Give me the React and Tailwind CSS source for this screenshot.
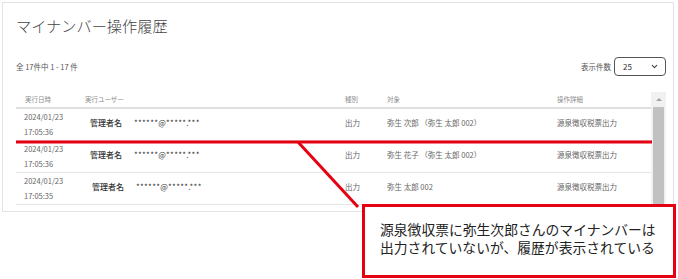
import { ChevronDown } from 'lucide-react';

const rows = [
    { date: '2024/01/23', time: '17:05:36', target: '弥生 次郎 （弥生 太郎 002）' },
    { date: '2024/01/23', time: '17:05:36', target: '弥生 花子 （弥生 太郎 002）' },
    { date: '2024/01/23', time: '17:05:35', target: '弥生 太郎 002' },
];

const cols = 'grid grid-cols-[64px_261px_42px_170px_1fr]';

function App() {
    return (
        <div className="relative w-[678px] h-[279px] bg-white overflow-hidden font-['Noto_Sans_CJK_JP','Noto_Sans',sans-serif]">
            <div className="ml-[2px] mt-[2px] w-[672px] h-[210px] border border-[#e3e3e3] flex flex-col pl-[13px] pr-[6px] overflow-hidden">
                <h1 className="pt-[10px] text-[15.2px] leading-[24px] text-[#444] font-light">マイナンバー操作履歴</h1>

                <div className="mt-[20px] h-[19px] flex justify-between items-center">
                    <div className="text-[7.5px] text-[#555] pt-[1px]">全 17件中 1 - 17 件</div>
                    <div className="flex items-center gap-[3px] pr-[1px]">
                        <span className="text-[7.5px] text-[#555]">表示件数</span>
                        <div className="w-[52px] h-[19px] border border-[#555] rounded-[4px] flex items-center justify-between pl-[8px] pr-[6px]">
                            <span className="text-[8px] text-[#333]">25</span>
                            <ChevronDown size={9} strokeWidth={3} color="#444" />
                        </div>
                    </div>
                </div>

                <div className="mt-[16px] flex-1 min-h-0 flex">
                    <div className="w-[635px] overflow-hidden">
                        <div className={`${cols} h-[17px] items-center border-b-2 border-[#dedede] text-[6.5px] text-[#8a8a8a]`}>
                            <div className="pl-[9px]">実行日時</div>
                            <div className="pl-[5px]">実行ユーザー</div>
                            <div className="pl-[4px]">種別</div>
                            <div className="pl-[4px]">対象</div>
                            <div className="pl-[4px]">操作詳細</div>
                        </div>
                        {rows.map((row, i) => (
                            <div key={i} className={`${cols} h-[32px] border-b border-[#e6e6e6] items-start text-[7.5px]`}>
                                <div className="pl-[8px] leading-[15px] text-[#666]">
                                    <div>{row.date}</div>
                                    <div>{row.time}</div>
                                </div>
                                <div className={`${i === 2 ? 'pl-[12px]' : 'pl-[10px]'} pt-[6px] leading-[15px] flex gap-[12px] text-[#333]`}>
                                    <span className="text-[8px] font-medium">管理者名</span>
                                    <span className="text-[8px] tracking-[0.3px]">******@*****.***</span>
                                </div>
                                <div className="pl-[4px] pt-[6px] leading-[15px] text-[#666]">出力</div>
                                <div className="pl-[4px] pt-[6px] leading-[15px] text-[#666]">{row.target}</div>
                                <div className="pl-[4px] pt-[6px] leading-[15px] text-[#666]">源泉徴収税票出力</div>
                            </div>
                        ))}
                    </div>
                    <div className="w-[15px] bg-[#f1f1f1] flex flex-col items-center">
                        <div className="h-[15px] w-full flex items-center justify-center">
                            <div className="w-0 h-0 border-l-[3px] border-r-[3px] border-b-[3px] border-l-transparent border-r-transparent border-b-[#a3a3a3]"></div>
                        </div>
                        <div className="flex-1 w-[11px] bg-[#c1c1c1]"></div>
                    </div>
                </div>
            </div>

            <svg className="absolute top-0 left-0 pointer-events-none" width="678" height="279">
                <line x1="16" y1="142" x2="652" y2="142" stroke="#e50012" strokeWidth="3" />
                <line x1="298" y1="142" x2="358" y2="207" stroke="#e50012" strokeWidth="3" />
            </svg>

            <div className="absolute left-[362px] top-[204px] w-[314px] h-[74px] border-[3px] border-[#e50012] bg-white pl-[15px] pt-[13px] text-[13.8px] leading-[18px] text-[#222]">
                <div>源泉徴収票に弥生次郎さんのマイナンバーは</div>
                <div>出力されていないが、履歴が表示されている</div>
            </div>
        </div>
    );
}

export default App;
